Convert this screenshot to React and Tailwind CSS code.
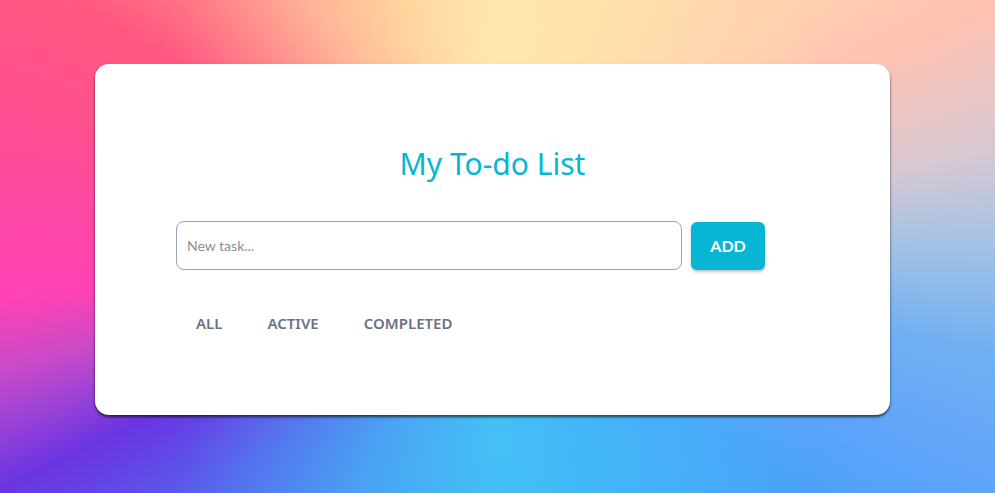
import React, { useState } from "react";

const filters = ["ALL", "ACTIVE", "COMPLETED"];

const App = () => {
  const [task, setTask] = useState("");
  const [filter, setFilter] = useState("ALL");

  return (
    <div className="relative w-full h-screen overflow-hidden bg-[conic-gradient(from_0deg_at_50%_50%,#ffe4a6_0deg,#ffd8a8_30deg,#ffd0b0_51deg,#ffc2b2_64deg,#d8c8d2_79deg,#a2c2e6_90deg,#72b0f2_102deg,#5fa4fa_116deg,#4aa2fa_129deg,#3aacfc_160deg,#3ab2fb_180deg,#4890f4_210deg,#5468ee_228deg,#6a34e2_244deg,#9a42d6_250deg,#c84ac8_256deg,#ff42b4_264deg,#ff48a4_275deg,#ff5090_286deg,#ff5880_300deg,#ffa08e_321deg,#ffc690_338deg,#ffe4a6_360deg)] pl-[95px] pt-[64px] font-['Open_Sans',sans-serif]">
      <div className="pointer-events-none absolute inset-0 bg-[radial-gradient(ellipse_at_50%_90%,rgba(80,206,240,0.5)_0%,transparent_45%),radial-gradient(ellipse_at_50%_10%,rgba(255,236,180,0.55)_0%,transparent_45%)]" />
      <div className="relative w-[795px] h-[351px] bg-white rounded-[14px] shadow-[0_2px_3px_rgba(0,0,0,0.65)] pt-[82px] pl-[81px]">
        <h1 className="w-[633px] text-center text-[30px] leading-[36px] text-[#06b6d4] font-['Noto_Sans',sans-serif]">
          My To-do List
        </h1>

        <div className="flex items-center mt-[39px]">
          <input
            type="text"
            placeholder="New task..."
            value={task}
            onChange={(e) => setTask(e.target.value)}
            className="w-[506px] h-[49px] border border-[#94a3b8] rounded-lg px-[10px] text-sm text-gray-700 placeholder:text-[#8e8e8e] outline-none font-['Lato',sans-serif]"
          />
          <button
            onClick={() => setTask("")}
            className="ml-[9px] w-[74px] h-[48px] rounded-md bg-[#06b6d4] text-white font-bold text-[16px] shadow-[0_2px_3px_rgba(0,0,0,0.25)] font-['Lato',sans-serif]"
          >
            ADD
          </button>
        </div>

        <div className="flex mt-[33px] gap-[5px]">
          {filters.map((f) => (
            <button
              key={f}
              onClick={() => setFilter(f)}
              className="px-5 h-[40px] text-[15px] font-semibold text-[#6b7280] font-['Noto_Sans',sans-serif]"
            >
              {f}
            </button>
          ))}
        </div>
      </div>
    </div>
  );
};

export default App;
